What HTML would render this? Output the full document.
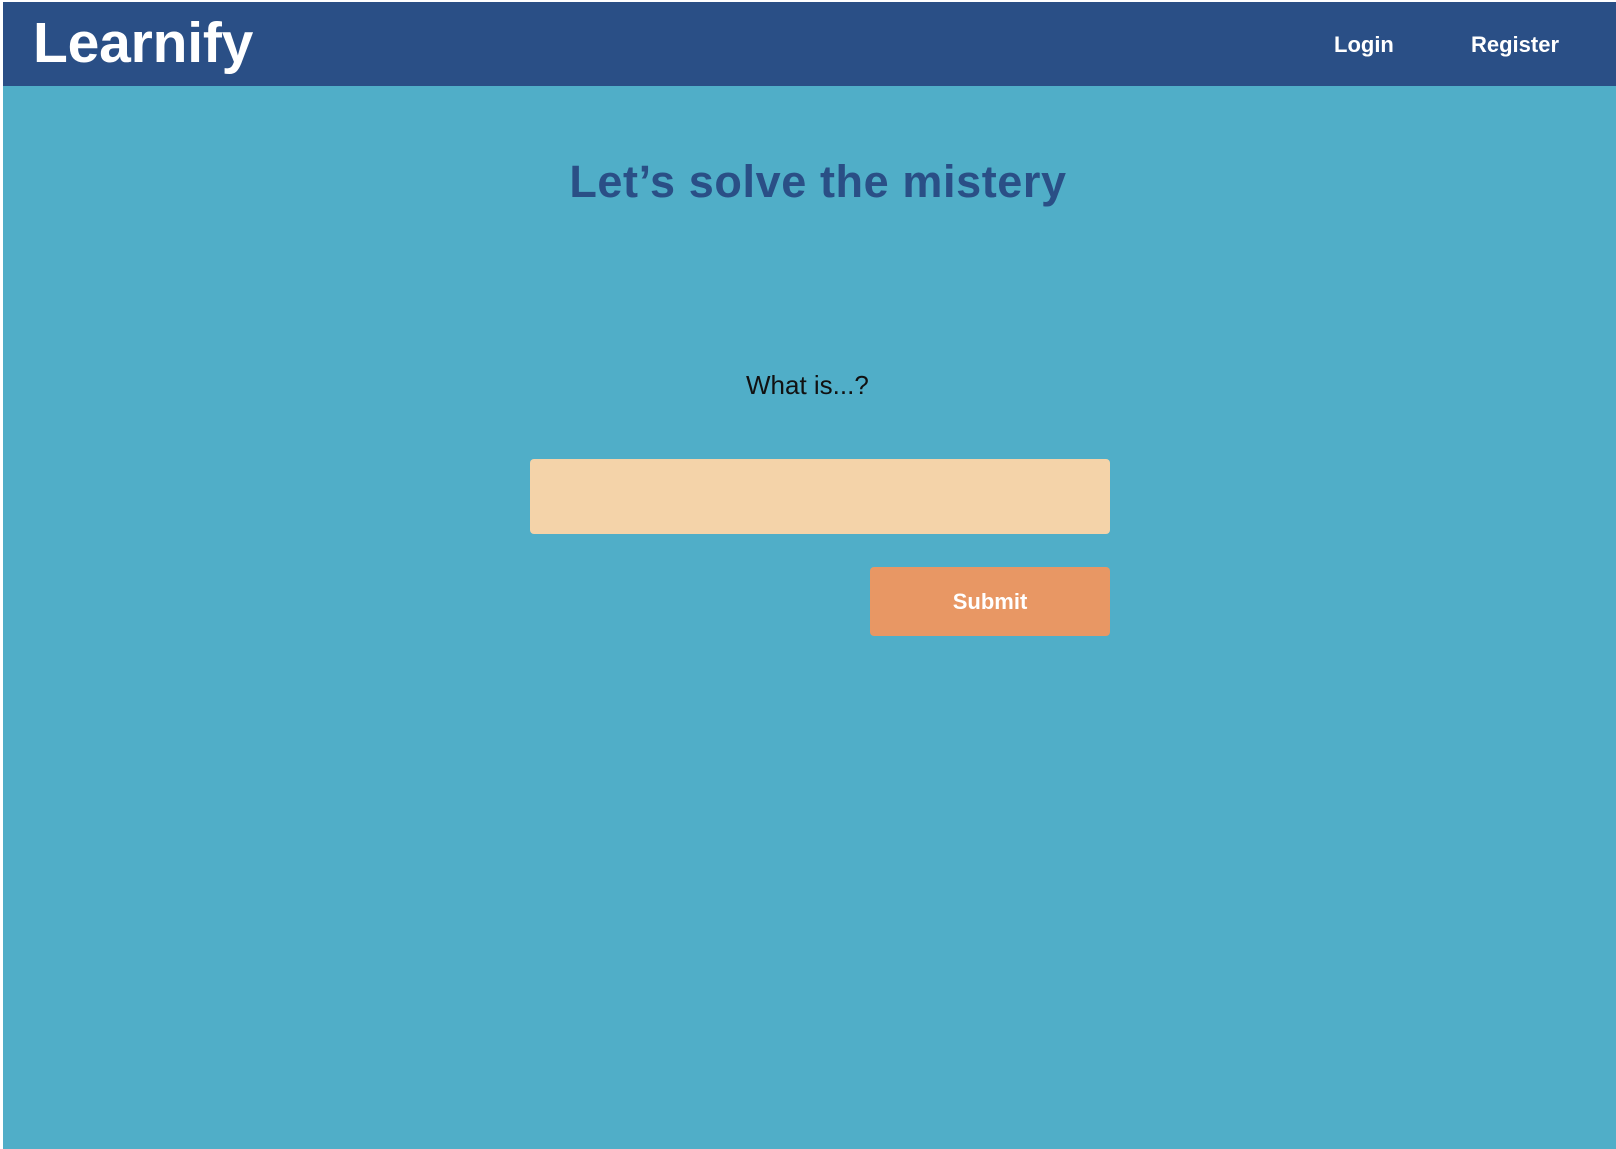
<!DOCTYPE html>
<html><head><meta charset="utf-8"><style>
html,body{margin:0;padding:0;width:1616px;height:1149px;overflow:hidden;background:#fff;font-family:"Liberation Sans",sans-serif}
.main{position:absolute;left:3px;top:2px;right:0;bottom:0;background:#50aec8}
.hdr{position:absolute;left:3px;top:2px;right:0;height:84px;background:#2a4f86}
.logo{position:absolute;left:30px;top:8px;font-size:57px;font-weight:bold;color:#fff;letter-spacing:-0.2px}
.nav{position:absolute;top:30px;font-size:22px;font-weight:bold;color:#fff}
h1{position:absolute;left:0;right:0;top:156px;margin:0;text-align:center;font-size:45px;color:#2a4f86;letter-spacing:0.6px;padding-left:20px}
.q{position:absolute;left:746px;top:370px;font-size:26px;color:#111}
.inp{position:absolute;left:530px;top:459px;width:580px;height:75px;background:#f4d3a9;border-radius:4px}
.btn{position:absolute;left:870px;top:567px;width:240px;height:69px;background:#e89764;border-radius:4px;color:#fff;font-weight:bold;font-size:22px;text-align:center;line-height:69px}
</style></head><body>
<div class="main"></div>
<div class="hdr">
<div class="logo">Learnify</div>
<div class="nav" style="left:1331px">Login</div>
<div class="nav" style="left:1468px">Register</div>
</div>
<h1>Let’s solve the mistery</h1>
<div class="q">What is...?</div>
<div class="inp"></div>
<div class="btn">Submit</div>
</body></html>
